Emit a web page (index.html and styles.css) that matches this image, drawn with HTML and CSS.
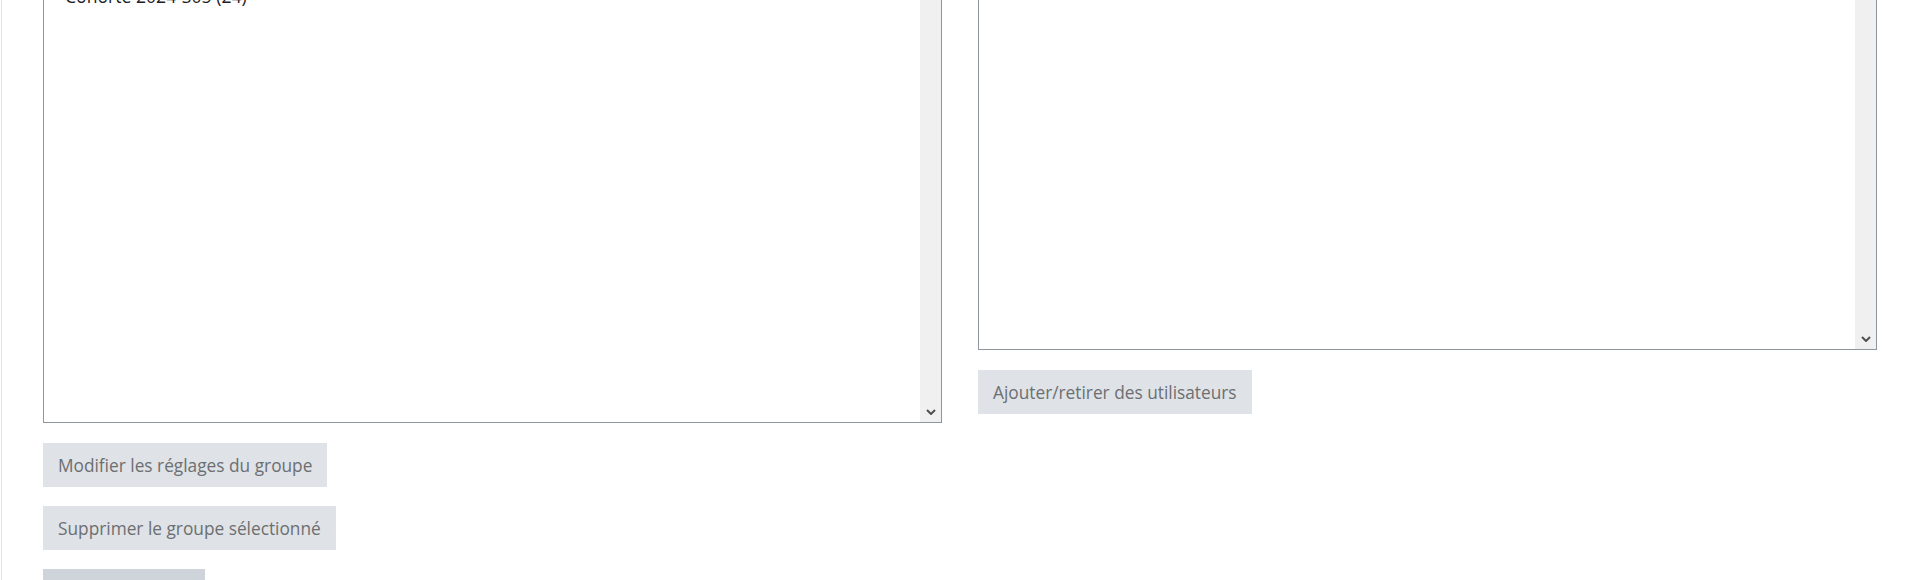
FILE: index.html
```html
<!DOCTYPE html>
<html lang="fr">
<head>
<meta charset="utf-8">
<title>Groupes</title>
<link rel="stylesheet" href="styles.css">
</head>
<body>
<div class="card">
  <div class="columns">
    <div class="col">
      <div class="listbox listbox-groups">
        <div class="options">
          <div class="option">Cohorte 2024-S05 (24)</div>
        </div>
        <div class="scrolltrack">
          <svg class="chev" width="10" height="6" viewBox="0 0 10 6"><path d="M1 1 L5 5 L9 1" fill="none" stroke="#505050" stroke-width="2"/></svg>
        </div>
      </div>
      <div class="actions">
        <button class="btn btn-disabled" type="button">Modifier les réglages du groupe</button>
        <button class="btn btn-disabled" type="button">Supprimer le groupe sélectionné</button>
        <button class="btn btn-secondary" type="button">Créer un groupe</button>
      </div>
    </div>
    <div class="col">
      <div class="listbox listbox-members">
        <div class="options"></div>
        <div class="scrolltrack">
          <svg class="chev" width="10" height="6" viewBox="0 0 10 6"><path d="M1 1 L5 5 L9 1" fill="none" stroke="#505050" stroke-width="2"/></svg>
        </div>
      </div>
      <div class="actions">
        <button class="btn btn-disabled" type="button">Ajouter/retirer des utilisateurs</button>
      </div>
    </div>
  </div>
</div>
</body>
</html>
```

FILE: styles.css
```css
html, body {
  margin: 0;
  padding: 0;
  background: #ffffff;
  overflow: hidden;
}

body {
  font-family: "Open Sans", "Noto Sans", "Liberation Sans", sans-serif;
  color: #1d2125;
}

.card {
  margin-left: 1px;
  width: 1915px;
  height: 620px;
  border-left: 1px solid #e3e5e8;
  border-right: 1px solid #e3e5e8;
  padding: 0 40px 0 41px;
  box-sizing: content-box;
}

.columns {
  display: grid;
  grid-template-columns: 899px 899px;
  column-gap: 36px;
  margin-top: -30px;
  align-items: start;
}

.col {
  display: flex;
  flex-direction: column;
  align-items: flex-start;
}

.listbox {
  box-sizing: border-box;
  width: 899px;
  border: 1px solid #8f959e;
  display: flex;
  background: #fff;
}

.listbox-groups {
  height: 453px;
}

.listbox-members {
  height: 380px;
}

.options {
  flex: 1;
  padding: 13px 0 0 21px;
}

.option {
  font-size: 17.6px;
  line-height: 24px;
  color: #1d2125;
}

.scrolltrack {
  width: 21px;
  background: #f0f0f0;
  display: flex;
  align-items: flex-end;
  justify-content: center;
  padding-bottom: 7px;
  box-sizing: border-box;
}

.chev {
  display: block;
}

.actions {
  display: flex;
  flex-direction: column;
  align-items: flex-start;
  gap: 19px;
  margin-top: 20px;
}

.btn {
  font-family: "Open Sans", "Noto Sans", "Liberation Sans", sans-serif;
  font-size: 17.3px;
  line-height: 27px;
  height: 44px;
  box-sizing: border-box;
  padding: 7px 14px;
  border: 1px solid transparent;
  border-radius: 0;
  cursor: pointer;
}

.btn-disabled {
  background: #dfe2e6;
  color: #6c6f72;
}

.btn-secondary {
  background: #ced4da;
  color: #1d2125;
}
```
